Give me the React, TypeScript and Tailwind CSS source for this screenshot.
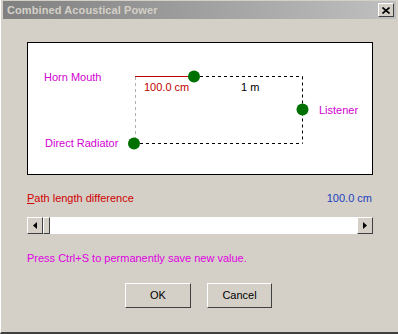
import React from 'react';

function ArrowBtn({ dir }: { dir: 'left' | 'right' }) {
  return (
    <div className="w-[16px] h-full bg-[#d4d0c8] border border-t-white border-l-white border-r-[#404040] border-b-[#404040] flex items-center justify-center">
      <svg width="4" height="7" viewBox="0 0 4 7">
        {dir === 'left' ? <path d="M4 0 L0 3.5 L4 7 Z" fill="#000" /> : <path d="M0 0 L4 3.5 L0 7 Z" fill="#000" />}
      </svg>
    </div>
  );
}

function Diagram() {
  const label = 'font-["Liberation_Sans",Arial,sans-serif]';
  return (
    <svg width="343" height="130" viewBox="0 0 343 130" className={label} style={{ display: 'block' }}>
      {/* paths (offset: box inner origin = 28,43) */}
      <line x1="107" y1="33.5" x2="166" y2="33.5" stroke="#c00000" strokeWidth="1" />
      <line x1="107.5" y1="34" x2="107.5" y2="100" stroke="#b0b0b0" strokeDasharray="3 3" />
      <line x1="166" y1="33.5" x2="274.5" y2="33.5" stroke="#000" strokeDasharray="3 3" />
      <line x1="274.5" y1="33.5" x2="274.5" y2="100.5" stroke="#000" strokeDasharray="3 3" />
      <line x1="106" y1="100.5" x2="274.5" y2="100.5" stroke="#000" strokeDasharray="3 3" />
      <circle cx="166" cy="33.5" r="6" fill="#007000" />
      <circle cx="274.5" cy="66.5" r="6" fill="#007000" />
      <circle cx="106" cy="100.5" r="6" fill="#007000" />
      <text x="16" y="38" fontSize="11" fill="#d000d0">Horn Mouth</text>
      <text x="17" y="104" fontSize="11" fill="#d000d0">Direct Radiator</text>
      <text x="291" y="71" fontSize="11" fill="#d000d0">Listener</text>
      <text x="116" y="48" fontSize="11" fill="#c00000">100.0 cm</text>
      <text x="213" y="48" fontSize="11" fill="#000">1 m</text>
    </svg>
  );
}

export default function App() {
  return (
    <div className="w-[398px] h-[334px] bg-[#d4d0c8] font-['Liberation_Sans',Arial,sans-serif] text-[11px] flex flex-col border-l border-l-white border-b-2 border-b-[#404040] overflow-hidden">
      {/* Title bar */}
      <div className="h-[18px] ml-[2px] mr-[2px] mt-[1px] bg-gradient-to-r from-[#808080] to-[#c0c0c0] flex items-center justify-between pl-[4px] pr-[2px]">
        <span className="font-bold text-[11px] text-[#d4d0c8] tracking-[0.1px]">Combined Acoustical Power</span>
        <div className="w-[16px] h-[14px] bg-[#d4d0c8] border border-t-white border-l-white border-r-[#404040] border-b-[#404040] flex items-center justify-center">
          <svg width="8" height="7" viewBox="0 0 8 7">
            <path d="M0.5 0.5 L7.5 6.5 M7.5 0.5 L0.5 6.5" stroke="#000" strokeWidth="1.6" />
          </svg>
        </div>
      </div>

      <div className="flex flex-col px-[26px]">
        {/* Diagram box */}
        <div className="mt-[23px] w-[346px] h-[133px] bg-white border border-black">
          <Diagram />
        </div>

        <div className="mt-[16px] flex justify-between items-center h-[14px]">
          <span className="text-[#d00000]"><span className="underline">P</span>ath length difference</span>
          <span className="text-[#2040c0]">100.0 cm</span>
        </div>

        {/* Scrollbar */}
        <div className="mt-[12px] w-[346px] h-[17px] flex bg-white">
          <ArrowBtn dir="left" />
          <div className="w-[7px] h-full bg-[#d4d0c8] border border-t-white border-l-white border-r-[#404040] border-b-[#404040]" />
          <div className="flex-1" />
          <ArrowBtn dir="right" />
        </div>

        <div className="mt-[16px] text-[#e000e0]">Press Ctrl+S to permanently save new value.</div>

        <div className="mt-[16px] flex justify-center gap-[16px] pr-[2px]">
          <button className="w-[66px] h-[25px] bg-[#d4d0c8] border border-t-white border-l-white border-r-[#404040] border-b-[#404040] text-black">OK</button>
          <button className="w-[65px] h-[25px] bg-[#d4d0c8] border border-t-white border-l-white border-r-[#404040] border-b-[#404040] text-black">Cancel</button>
        </div>
      </div>
    </div>
  );
}
